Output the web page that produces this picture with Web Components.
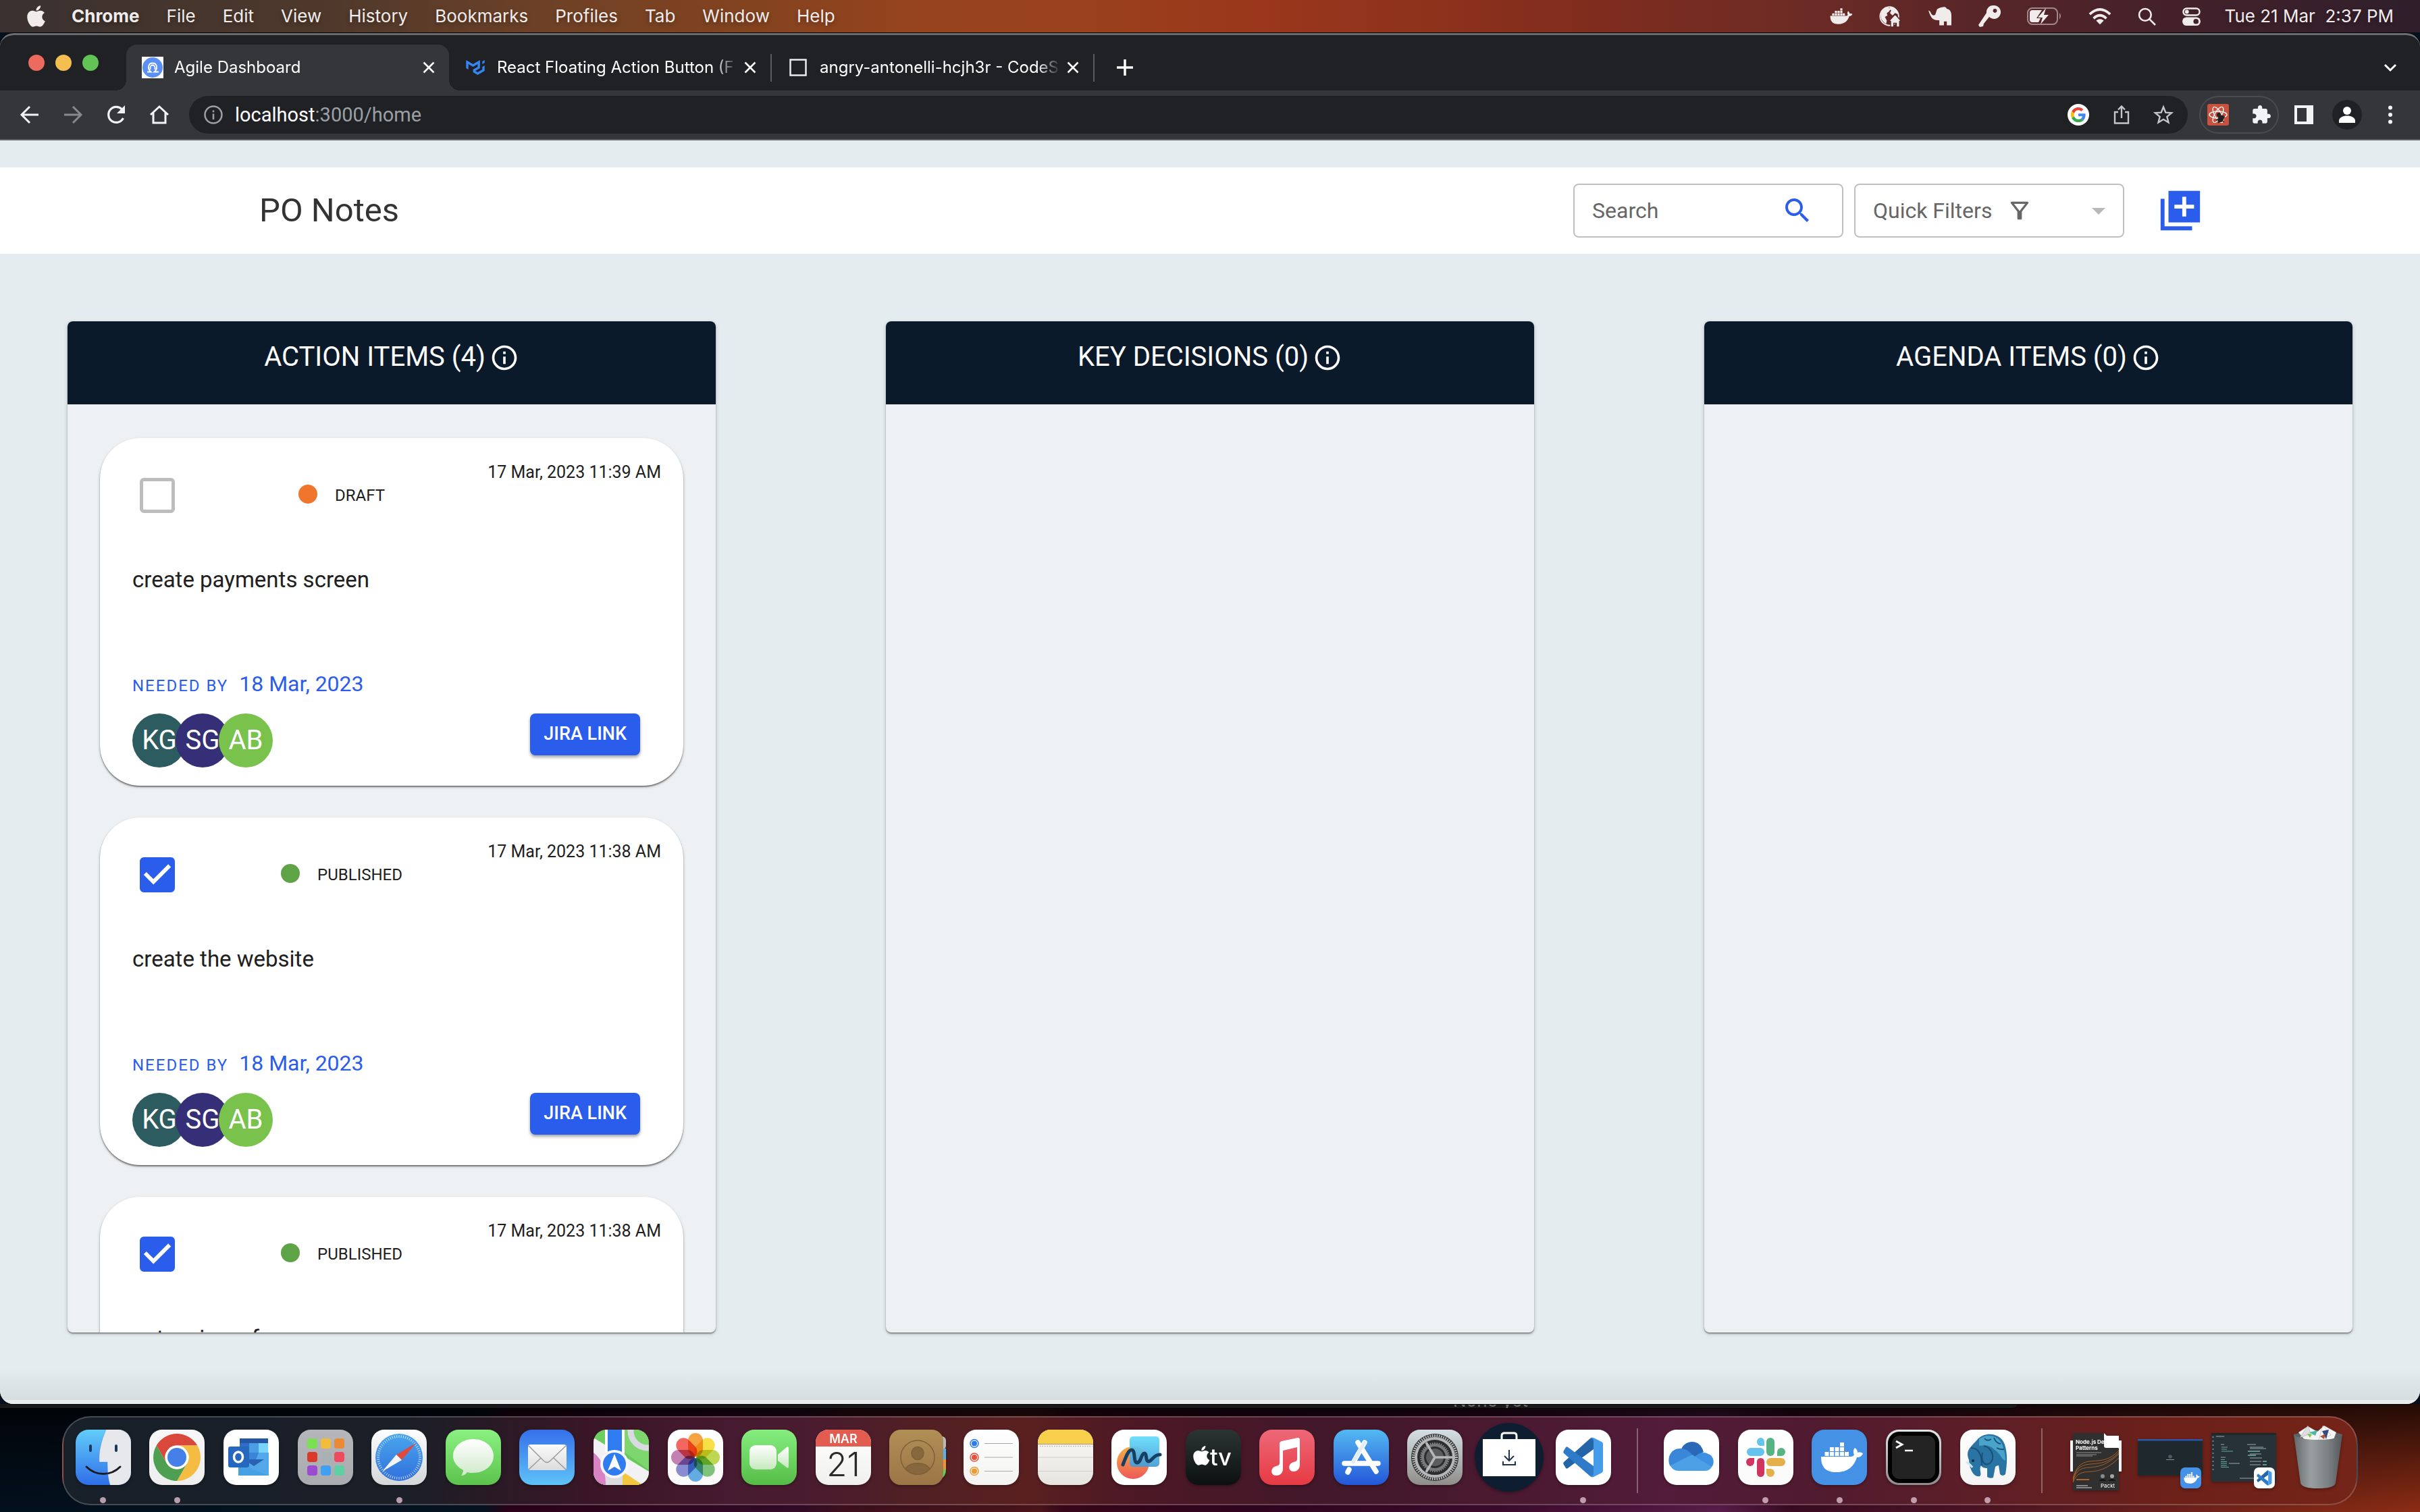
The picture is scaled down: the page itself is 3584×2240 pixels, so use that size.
<!DOCTYPE html>
<html lang="en">
<head>
<meta charset="utf-8">
<title>Agile Dashboard</title>
<style>
  html, body { margin: 0; height: 100%; }
  body { display: flex; flex-direction: column; height: 100vh; overflow: hidden; background: #04101e; font-family: Roboto, "Liberation Sans", sans-serif; }
</style>
</head>
<body>
<mac-menubar></mac-menubar>
<browser-window>
  <tab-strip slot="chrome">
    <browser-tab active icon="favAgile">Agile Dashboard</browser-tab>
    <browser-tab icon="favMui">React Floating Action Button (F</browser-tab>
    <browser-tab icon="favBox">angry-antonelli-hcjh3r - CodeS</browser-tab>
  </tab-strip>
  <nav-toolbar slot="chrome"></nav-toolbar>
  <notes-header>PO Notes</notes-header>
  <notes-board>
    <notes-column heading="ACTION ITEMS (4)">
      <note-card status="DRAFT" date="17 Mar, 2023 11:39 AM" due="18 Mar, 2023">create payments screen</note-card>
      <note-card status="PUBLISHED" date="17 Mar, 2023 11:38 AM" due="18 Mar, 2023">create the website</note-card>
      <note-card status="PUBLISHED" date="17 Mar, 2023 11:38 AM" due="18 Mar, 2023">get review of</note-card>
    </notes-column>
    <notes-column heading="KEY DECISIONS (0)"></notes-column>
    <notes-column heading="AGENDA ITEMS (0)"></notes-column>
  </notes-board>
</browser-window>
<mac-dock></mac-dock>

<script>
const DOCKER = '<rect x="42" y="19" width="6" height="6"/><path d="M27 26h6v6h-6zM34.500 26h6v6h-6zM42 26h6v6h-6zM19.500 33h6v6h-6zM27 33h6v6h-6zM34.500 33h6v6h-6zM42 33h6v6h-6zM49 33h6v6h-6z"/><path d="M14 40h43c4 0 5-1 6-3-2-4-1-8 1-10 3 2 4 4 4 7 3-1 6 0 8 1-2 5-5 6-9 6-4 13-13 22-30 22C20 63 14 55 14 40Z"/>';
const APPLE = '<path d="M318.700 268.700c-.2-36.700 16.400-64.400 50-84.800-18.800-26.900-47.200-41.700-84.700-44.600-35.500-2.800-74.300 20.700-88.500 20.700-15 0-49.400-19.700-76.400-19.700C63.300 141.200 4 184.800 4 273.500q0 39.300 14.400 81.200c12.800 36.700 59 126.700 107.200 125.200 25.200-.6 43-17.900 75.800-17.900 31.800 0 48.300 17.900 76.400 17.900 48.600-.7 90.400-82.500 102.600-119.300-65.200-30.700-61.700-90-61.700-91.900zm-56.600-164.200c27.300-32.400 24.800-61.900 24-72.500-24.100 1.400-52 16.400-67.900 34.900-17.500 19.800-27.800 44.300-25.600 71.900 26.100 2 49.900-11.400 69.500-34.300z"/>';
const VSCODE = '<path fill="#2465a8" d="M12 52c-1-1-1-3 0-4L51 13c2-2 4-1 5-1v17L18 57c-1 1-2 1-3 0Z"/><path fill="#2f7bc9" d="M12 31c-1 1-1 3 0 4l39 34c2 2 4 1 5 1V54L18 26c-1-1-2-1-3 0Z"/><path fill="#459ceb" d="M56 12l12 6q2 1 2 3v40q0 2-2 3l-12 6q-3 0-5-2 5 2 5-3V17q0-5-5-3 2-2 5-2Z"/>';
const lin = (id, a, b) => `<linearGradient id="${id}" x1="0" y1="0" x2="0" y2="1"><stop stop-color="${a}"/><stop offset="1" stop-color="${b}"/></linearGradient>`;
const tile = (a, b, inner = '') => `<svg viewBox="0 0 82 82"><defs>${lin('bg', a, b)}<clipPath id="c"><rect width="82" height="82" rx="19"/></clipPath></defs><rect width="82" height="82" rx="19" fill="url(#bg)"/><g clip-path="url(#c)">${inner}</g></svg>`;
const ticks = (n, r1, r2, w, col) => Array.from({length: n}, (_, i) => `<path d="M0 ${-r1}V${-r2}" transform="translate(41 41) rotate(${i * 360 / n})" stroke="${col}" stroke-width="${w}"/>`).join('');
const petals = ['#f5962a', '#f6dc2e', '#b5d13b', '#6cb96a', '#4f9fe0', '#7a7cc9', '#b86fa8', '#f0524a'];

const ICONS = {
  apple: `<svg viewBox="0 32 384 448" fill="currentColor">${APPLE}</svg>`,
  dockerMini: `<svg viewBox="13 17 64 48" fill="currentColor">${DOCKER}</svg>`,
  globe: '<svg viewBox="0 0 36 34"><circle cx="16" cy="17" r="14.500" fill="none" stroke="currentColor" stroke-width="2"/><path fill="currentColor" d="M3 12C6 5 10 3 14 3l4 3-3 4-3 2 1 4-4 2 3 6-1 5C5 26 1 20 3 12ZM17 2c8 1 12 6 13 12l-5-2-4 4-4-4 2-4-3-2Z"/><path fill="currentColor" stroke="#5a2628" stroke-width="1.500" d="M25 14l10 11h-3v9h-5v-6h-4v6h-5v-9h-3Z"/></svg>',
  elephant: '<svg viewBox="0 0 40 34" fill="currentColor"><path d="M0 7c2 0 4 3 5 6 2 3 5 3 7 1l3-9c4-3 8-4 11-4 3-1 5 1 6 3 6 1 8 6 8 12v17h-8v-7h-5v7h-8V24c-4 0-8 0-12-3C4 18 2 13 0 7Z"/></svg>',
  key: '<svg viewBox="0 0 34 34"><path fill="currentColor" fill-rule="evenodd" d="M23 1a10 10 0 1 1-6 17L9 28l-1 4-5 1-2-3 12-18A10 10 0 0 1 23 1Zm2 5a3 3 0 1 0 1 0Z"/></svg>',
  battery: '<svg viewBox="0 0 52 26"><rect x="1" y="1" width="44" height="24" rx="7" fill="none" stroke="currentColor" stroke-opacity=".5" stroke-width="2"/><path d="M48 8q4 4 0 10Z" fill="currentColor" fill-opacity=".5"/><path fill="currentColor" d="M8 4h14l-8 12h6l-3 6H8q-4 0-4-4V8q0-4 4-4Z"/><path fill="currentColor" d="M28 1L16 15h7l-3 10 12-14h-7Z"/></svg>',
  wifi: '<svg viewBox="0 0 36 26"><g fill="none" stroke="currentColor" stroke-width="4"><path d="M2 10Q18-5 34 10M8 16.500Q18 7 28 16.500"/></g><path fill="currentColor" d="M12 20q6-5 12 0l-6 6Z"/></svg>',
  search: '<svg viewBox="0 0 26 26" fill="none" stroke="currentColor" stroke-width="2.500"><circle cx="10.500" cy="10.500" r="8.500"/><path d="M17 17l8 8"/></svg>',
  control: '<svg viewBox="0 0 28 28"><rect x="1.500" y="1.500" width="25" height="10.500" rx="5.200" fill="none" stroke="currentColor" stroke-width="2.500"/><circle cx="7" cy="6.700" r="3" fill="currentColor"/><rect y="15" width="28" height="13" rx="6.500" fill="currentColor"/><circle cx="21" cy="21.500" r="4" fill="#45212a"/></svg>',
  favAgile: '<svg viewBox="0 0 32 32"><path fill="#fff" d="M0 0h32v32H0z"/><circle cx="16" cy="16" r="15" fill="#5a8ff5"/><path fill="none" stroke="#fff" stroke-width="1.800" d="M8 22.500h5.500c-6-5-4-13 2.500-13s8.500 8 2.500 13H25M12.500 19v-3a3.500 3.500 0 1 1 7 0v3"/></svg>',
  favMui: '<svg viewBox="-2 -1 28 26" fill="#3585f5"><path d="M0 2.475v10.390l3 1.733V7.670l6 3.465 6-3.465v3.465l-6 3.463v3.464l6 3.463 9-5.195V9.402l-3 1.733v3.463l-6 3.464-3-1.732 6-3.465V2.475L9 7.670 0 2.475zM24 2.475l-3 1.733v3.463l3-1.732V2.475z"/></svg>',
  favBox: '<svg viewBox="0 0 32 32"><path d="M4.500 4.500h23v23h-23z" fill="none" stroke="#e8eaed" stroke-width="2.500"/></svg>',
  close: '<svg viewBox="0 0 20 20" stroke="currentColor" stroke-width="2.600"><path d="M2.500 2.500l15 15M17.500 2.500l-15 15"/></svg>',
  plus: '<svg viewBox="0 0 24 24" stroke="currentColor" stroke-width="3.500"><path d="M0 12h24M12 0v24"/></svg>',
  chevron: '<svg viewBox="0 0 20 20" fill="none" stroke="currentColor" stroke-width="3"><path d="M2 6l8 8 8-8"/></svg>',
  back: '<svg viewBox="0 0 28 28" fill="none" stroke="currentColor" stroke-width="3"><path d="M27 14H3M14 2L2 14l12 12"/></svg>',
  forward: '<svg viewBox="0 0 28 28" fill="none" stroke="currentColor" stroke-width="3"><path d="M1 14h24M14 2l12 12-12 12"/></svg>',
  reload: '<svg viewBox="0 0 28 28"><path d="M24.500 19A11.500 11.500 0 1 1 22.500 6" fill="none" stroke="currentColor" stroke-width="3.200"/><path d="M27 0v12H15Z" fill="currentColor"/></svg>',
  home: '<svg viewBox="0 0 28 28" fill="none" stroke="currentColor" stroke-width="3"><path d="M1 14L14 2l13 12M5 11v15h18V11"/></svg>',
  infoThin: '<svg viewBox="0 0 28 28"><circle cx="14" cy="14" r="12.500" fill="none" stroke="currentColor" stroke-width="2.500"/><path fill="currentColor" d="M12.700 12.500h2.600V21h-2.600zM12.700 7.500h2.600v2.800h-2.600z"/></svg>',
  google: '<svg viewBox="0 0 32 32"><circle cx="16" cy="16" r="16" fill="#fff"/><g transform="translate(5 5) scale(.46)"><path fill="#EA4335" d="M24 9.500c3.540 0 6.710 1.220 9.210 3.600l6.850-6.850C35.900 2.380 30.470 0 24 0 14.620 0 6.510 5.380 2.560 13.220l7.980 6.190C12.430 13.720 17.740 9.500 24 9.500z"/><path fill="#4285F4" d="M46.980 24.550c0-1.570-.15-3.090-.38-4.550H24v9.020h12.940c-.58 2.960-2.260 5.480-4.780 7.180l7.730 6c4.510-4.180 7.090-10.360 7.090-17.650z"/><path fill="#FBBC05" d="M10.530 28.590c-.48-1.450-.76-2.990-.76-4.590s.27-3.140.76-4.590l-7.980-6.190C.92 16.460 0 20.120 0 24c0 3.880.92 7.540 2.560 10.780l7.970-6.190z"/><path fill="#34A853" d="M24 48c6.480 0 11.930-2.130 15.890-5.810l-7.730-6c-2.150 1.450-4.920 2.300-8.160 2.300-6.260 0-11.570-4.220-13.470-9.910l-7.980 6.190C6.510 42.620 14.620 48 24 48z"/></g></svg>',
  share: '<svg viewBox="0 0 28 28" fill="none" stroke="currentColor" stroke-width="2.400"><path d="M9 10H4v16.500h20V10h-5M14 19V2M9 6.500l5-5 5 5"/></svg>',
  star: '<svg viewBox="0 0 28 28" fill="none" stroke="currentColor" stroke-width="2.400"><path d="M14 2.500l3.300 8.200 8.800.6-6.800 5.600 2.200 8.600L14 20.800l-7.500 4.700 2.200-8.600-6.800-5.600 8.800-.6Z"/></svg>',
  react: '<svg viewBox="0 0 32 32"><rect width="32" height="32" rx="3" fill="#c9523e"/><g fill="none" stroke="#fff" stroke-width="1.300"><ellipse cx="16" cy="16" rx="13" ry="5"/><ellipse cx="16" cy="16" rx="13" ry="5" transform="rotate(60 16 16)"/><ellipse cx="16" cy="16" rx="13" ry="5" transform="rotate(120 16 16)"/></g><ellipse cx="20" cy="22" rx="4" ry="6" transform="rotate(35 20 22)" fill="#222"/><circle cx="17" cy="16" r="3" fill="#222"/><path d="M13 24l13-5M16 28l8-11M25 27l-9-8" stroke="#222" stroke-width="1.500"/></svg>',
  puzzle: '<svg viewBox="1 1.500 22 21" fill="currentColor"><path d="M20.500 11H19V7c0-1.100-.9-2-2-2h-4V3.500C13 2.120 11.880 1 10.500 1S8 2.120 8 3.500V5H4c-1.100 0-1.990.9-1.990 2v3.800H3.500c1.490 0 2.700 1.210 2.700 2.700s-1.210 2.700-2.700 2.700H2V20c0 1.100.9 2 2 2h3.800v-1.500c0-1.490 1.210-2.700 2.700-2.700 1.490 0 2.700 1.210 2.700 2.700V22H17c1.100 0 2-.9 2-2v-4h1.500c1.380 0 2.500-1.120 2.500-2.500S21.880 11 20.500 11z"/></svg>',
  panel: '<svg viewBox="0 0 28 28"><path fill="currentColor" fill-rule="evenodd" d="M0 0h28v28H0ZM4 4v20h14V4Z"/></svg>',
  person: '<svg viewBox="0 0 44 44"><circle cx="22" cy="22" r="22" fill="#202124"/><circle cx="22" cy="16" r="6" fill="#fff"/><path fill="#fff" d="M10 34v-3c0-5 6-7.500 12-7.500S34 26 34 31v3Z"/></svg>',
  dots: '<svg viewBox="0 0 28 28" fill="currentColor"><circle cx="14" cy="3.500" r="3"/><circle cx="14" cy="14" r="3"/><circle cx="14" cy="24.500" r="3"/></svg>',
  muiSearch: '<svg viewBox="0 0 24 24" fill="currentColor"><path d="M15.500 14h-.79l-.28-.27C15.410 12.590 16 11.110 16 9.500 16 5.910 13.090 3 9.500 3S3 5.910 3 9.500 5.910 16 9.500 16c1.610 0 3.090-.59 4.230-1.570l.27.28v.79l5 4.990L20.490 19l-4.990-5zm-6 0C7.010 14 5 11.990 5 9.500S7.010 5 9.500 5 14 7.010 14 9.500 11.990 14 9.500 14z"/></svg>',
  muiFilter: '<svg viewBox="0 0 24 24" fill="currentColor"><path d="M7 6h10l-5.010 6.300L7 6zm-2.750-.39C6.270 8.200 10 13 10 13v6c0 .55.45 1 1 1h2c.55 0 1-.45 1-1v-6s3.720-4.800 5.740-7.390c.51-.66.04-1.610-.79-1.610H5.040c-.83 0-1.300.95-.79 1.610z"/></svg>',
  muiDrop: '<svg viewBox="0 0 24 24" fill="currentColor"><path d="M7 10l5 5 5-5z"/></svg>',
  muiAdd: '<svg viewBox="0 0 24 24" fill="currentColor"><path d="M4 6H2v16h16v-2H4V6zm18-4H6v16h16V2zm-3 9h-4v4h-2v-4H9V9h4V5h2v4h4v2z"/></svg>',
  muiInfo: '<svg viewBox="0 0 24 24" fill="currentColor"><path d="M11 7h2v2h-2zm0 4h2v6h-2zm1-9C6.480 2 2 6.480 2 12s4.480 10 10 10 10-4.480 10-10S17.520 2 12 2zm0 18c-4.410 0-8-3.590-8-8s3.590-8 8-8 8 3.590 8 8-3.590 8-8 8z"/></svg>',
  muiTick: '<svg viewBox="3 3 18 18" fill="currentColor"><path d="M10 17l-5-5 1.410-1.410L10 14.170l7.590-7.590L19 8z"/></svg>',

  finder: tile('#62cdf9', '#2f6ee8', '<path fill="#e6e8ec" d="M45 0C38 16 34 32 35 48h12c0 14 1 24 4 34h31V0Z"/><path d="M22 24v7M60 24v7" stroke="#173a5c" stroke-width="4" stroke-linecap="round"/><path d="M16 55c14 14 36 14 50 0" fill="none" stroke="#1b1d22" stroke-width="3" stroke-linecap="round"/><path d="M45 0C38 16 34 32 35 48h12c0 14 1 24 4 34" fill="none" stroke="#2f6ee8" stroke-opacity=".35" stroke-width="1"/>'),
  chrome: tile('#f7f7f7', '#eeeeee', '<path fill="#d9483b" d="M10.700 23.500A35 35 0 0 1 71.300 23.500H41A17.500 17.500 0 0 0 25.800 49.750Z"/><path fill="#f4bd41" d="M71.300 23.500A35 35 0 0 1 41 76L56.200 49.750A17.500 17.500 0 0 0 41 23.500Z"/><path fill="#4f9f52" d="M41 76A35 35 0 0 1 10.700 23.500L25.800 49.750A17.500 17.500 0 0 0 56.200 49.750Z"/><circle cx="41" cy="41" r="17.500" fill="#fff"/><circle cx="41" cy="41" r="14" fill="#4580e8"/>'),
  outlook: tile('#fff', '#fff', '<path fill="#2557a4" d="M24 13h42v8H24z"/><path fill="#2f6ec4" d="M24 20h14v16H24z"/><path fill="#4b9de4" d="M38 20h14v14H38z"/><path fill="#79d4fb" d="M52 20h14v14H52z"/><path fill="#3c85d6" d="M38 34h14v16H38z"/><path fill="#52a8e8" d="M52 34h15v34H22V50h24Z"/><path fill="#2a63b6" d="M30 44h30L45 54Z"/><path fill="#46a0e4" d="M22 50l45 18H22Z"/><rect x="7" y="25" width="31" height="31" rx="3" fill="#2668bd"/><ellipse cx="22" cy="40.500" rx="6.500" ry="7.500" fill="none" stroke="#fff" stroke-width="3.500"/>'),
  launchpad: tile('#b4b6ba', '#a9abae', ['#7be04f', '#f3bd3b', '#e98b35', '#d93a2c', '#a9b1b5', '#ee4b5e', '#9a4bd0', '#3fa0f4', '#5fcfa4'].map((c, i) => `<rect x="${14 + (i % 3) * 20}" y="${13 + Math.floor(i / 3) * 20}" width="15" height="15" rx="4" fill="${c}"/>`).join('')),
  safari: tile('#fdfdfd', '#d5d6d8', '<defs>' + lin('s', '#49a6ec', '#3170dd') + '</defs><circle cx="41" cy="41" r="35" fill="url(#s)"/>' + ticks(60, 33, 29, 0.8, '#e8f3ff') + '<path fill="#e2493d" d="M66 20L45 45 37 37Z"/><path fill="#f6f6f6" d="M16 62L37 37l8 8Z"/>'),
  messages: tile('#8af182', '#5bc34c', '<defs>' + lin('s', '#ffffff', '#cfe9ca') + '</defs><path fill="url(#s)" d="M41 14c17 0 30 11 30 25S58 64 41 64c-3 0-6 0-9-1-2 3-5 5-9 5 2-3 3-5 3-8C17 55 11 48 11 39c0-14 13-25 30-25Z"/>'),
  mail: tile('#3570ea', '#5fc3f8', '<defs>' + lin('s', '#fbfbfb', '#dcdcdc') + '</defs><rect x="13" y="22" width="57" height="38" rx="4" fill="url(#s)"/><path d="M14 24l22 22q5 5 10 0l23-22M14 59l18-17M69 59L51 42" fill="none" stroke="#9b9b9b" stroke-width="1.500"/>'),
  maps: tile('#6fcf62', '#5fc556', '<path fill="#f2f2f4" d="M0 12L82 62v20H0Z"/><path fill="#d983c4" d="M0 34c10 8 18 20 18 48H0Z"/><path fill="#f3c63f" d="M43 62l30 20H43Z"/><path fill="#7ed66f" d="M44 0h38v60L44 32Z"/><circle cx="80" cy="2" r="25" fill="none" stroke="#d9d9e2" stroke-width="9"/><path fill="#dcdce0" d="M18 50h25v32H18z"/><path fill="#fff" d="M17 0h29v40H17z"/><path fill="#2f7bf0" d="M21 0h21v40H21z"/><circle cx="31" cy="51" r="21" fill="#f6f6f8"/><circle cx="31" cy="51" r="17" fill="#2f7bf0"/><path fill="#fff" d="M31 36l10 25-10-6-10 6Z"/>'),
  photos: tile('#fff', '#fafafa', '<g style="isolation:isolate">' + petals.map((c, i) => `<rect x="30" y="5" width="22" height="35" rx="11" fill="${c}" fill-opacity=".88" style="mix-blend-mode:multiply" transform="rotate(${i * 45} 41 41)"/>`).join('') + '</g>'),
  facetime: tile('#86ee7f', '#55bd46', '<defs>' + lin('s', '#ffffff', '#c5e8be') + '</defs><rect x="12" y="23" width="40" height="36" rx="9" fill="url(#s)"/><path fill="url(#s)" d="M54 37l13-11q3-2 3 2v26q0 4-3 2L54 46Z"/>'),
  calendar: tile('#fff', '#f0f0ee', '<path fill="#e25c50" d="M0 0h82v25H0z"/><text x="41" y="20" text-anchor="middle" font-family="Inter, sans-serif" font-weight="600" font-size="18" fill="#fff">MAR</text><text x="41" y="69" text-anchor="middle" font-family="Inter, sans-serif" font-weight="300" font-size="49" fill="#2b2b2b">21</text>'),
  contacts: '<svg viewBox="0 0 82 82"><defs>' + lin('s', '#b08f55', '#9c7547') + '</defs><rect x="60" y="10" width="24" height="20" rx="6" fill="#b9b9bb"/><path fill="#55b5ea" d="M70 28h14v16H70z"/><path fill="#f09136" d="M70 44h14v15H70z"/><path fill="#63cf57" d="M70 59h14q0 10-8 14h-6z"/><rect width="80" height="82" rx="17" fill="url(#s)"/><g stroke="#7d6038" stroke-width="1.500"><circle cx="42" cy="41" r="25" fill="none"/><ellipse cx="42" cy="35" rx="9" ry="9.500" fill="#87683e"/><path fill="#87683e" d="M24 58c6-11 30-11 36 0-9 11-27 11-36 0Z"/></g></svg>',
  reminders: tile('#fff', '#f3f3f1', ['#2f7bf0', '#e8503c', '#ec9a33'].map((c, i) => `<circle cx="16" cy="${20.500 + i * 20.500}" r="6" fill="none" stroke="${c}" stroke-width="1.500"/><circle cx="16" cy="${20.500 + i * 20.500}" r="4" fill="${c}"/><path d="M31 ${20.500 + i * 20.500}h42" stroke="#a9a9ae" stroke-width="1.200"/>`).join('')),
  notes: tile('#fbfaf8', '#e6e4df', '<path fill="#f7cf4a" d="M0 0h82v21H0z"/><path d="M0 21.500h82" stroke="#a39a86"/><path d="M3 24.500h78" stroke="#b5b1a8" stroke-width="1.500" stroke-dasharray="1.500 2"/><path d="M0 41h82M0 61.500h82" stroke="#d2cfca"/>'),
  freeform: tile('#fff', '#fff', '<defs>' + lin('s', '#65dcfb', '#459bd6') + lin('t', '#f6ae45', '#ee5a58') + '</defs><circle cx="32" cy="49" r="24" fill="url(#t)"/><rect x="27" y="10" width="44" height="45" rx="5" fill="url(#s)" fill-opacity=".93"/><path d="M17 52c5-13 8-22 13-22 6 0 2 19 8 19s6-14 11-14c4 0 1 12 6 12s7-10 17-10" fill="none" stroke="#173f63" stroke-width="5" stroke-linecap="round"/>'),
  tv: tile('#2c3533', '#0c1011', `<g fill="#fff" transform="translate(11 22) scale(.064)">${APPLE}</g><text x="36" y="53" font-family="Inter, sans-serif" font-weight="500" font-size="34" fill="#fff">tv</text>`),
  music: tile('#ee6878', '#e63a43', '<path fill="#fff" d="M30 21q0-3 3-4l24-5q3 0 3 3v37c0 6-4 10-9 10-9 0-9-12 0-14 4-1 5-2 5-5V26l-21 5v27c0 6-4 10-10 10-9 0-9-12 0-14 4-1 5-2 5-5Z"/>'),
  appstore: tile('#53b9f2', '#2456d8', '<g stroke="#fff" stroke-width="7.500" stroke-linecap="round"><path d="M46 19L29 49M36 19l27 43M16 50h50M23 59l-2 4"/></g><path d="M46 19L29 48" stroke="#e3edf8" stroke-width="5" stroke-linecap="round"/>'),
  settings: tile('#d5dfe4', '#8f8d8a', '<circle cx="41" cy="41" r="35" fill="#2c2d2e"/>' + ticks(60, 34, 30, 1.800, '#b9bcbd') + '<circle cx="41" cy="41" r="28" fill="none" stroke="#b5b8b9" stroke-width="4"/>' + ticks(40, 22, 19, 1.600, '#8a8c8d') + '<circle cx="41" cy="41" r="18" fill="none" stroke="#77797a" stroke-width="4"/><circle cx="41" cy="41" r="13" fill="#5b5d5e"/><path d="M41 41h26M41 41L28 19M41 41L28 63" stroke="#b5b8b9" stroke-width="3.500"/>'),
  store: '<svg viewBox="0 0 82 82"><circle cx="41" cy="41" r="51" fill="#0f1d31"/><path d="M30 15V9q0-4 4-4h14q4 0 4 4v6" fill="none" stroke="#fff" stroke-width="3"/><path fill="#fff" d="M2 14h78v55H2z"/><g fill="none" stroke="#1f3350" stroke-width="2"><path d="M41 30v15M34 39l7 7 7-7M32 47v5h18v-5"/></g></svg>',
  vscode: tile('#fff', '#fff', VSCODE),
  onedrive: tile('#fff', '#fff', '<path fill="#2a68b8" d="M25 32c2-9 9-14 17-14s14 5 17 15L41 44Z"/><path fill="#3a86d8" d="M9 53C4 40 12 27 25 28c8 0 14 5 17 9L12 56Z"/><path fill="#3d90e2" d="M46 40c6-6 14-8 20-4 9 3 10 16 4 20Z"/><path fill="#4ba0e6" d="M10 53l32-16 29 18q-3 6-10 6H22q-9 0-12-8Z"/>'),
  slack: tile('#fff', '#fafafa', '<g fill="#65c4ee"><path d="M39 24h-6a5.500 6 0 1 1 6-6Z"/><rect x="13" y="27" width="26" height="12" rx="6"/></g><g fill="#57b382"><rect x="42" y="12" width="12" height="27" rx="6"/><path d="M58 39v-6a6 6 0 1 1 6 6Z"/></g><g fill="#cf3560"><path d="M24 42v6a6 6 0 1 1-6-6Z"/><rect x="28" y="42" width="11" height="28" rx="5.500"/></g><g fill="#e5b04c"><rect x="42" y="42" width="28" height="12" rx="6"/><path d="M42 58h6a6 6 0 1 1-6 6Z"/></g>'),
  docker: tile('#4591e6', '#4591e6', `<g fill="#fff">${DOCKER}</g>`),
  terminal: tile('#dfe6ea', '#8f8b8c', '<rect x="3" y="3" width="76" height="76" rx="17" fill="#000"/><rect x="9" y="9" width="64" height="64" rx="11" fill="#232323"/><path d="M15 17l9 5-9 5" fill="none" stroke="#fff" stroke-width="2.800"/><path d="M28 31h12" stroke="#fff" stroke-width="2.500"/>'),
  postgres: tile('#fff', '#f4f4f4', '<path fill="#2a74a4" d="M26 14c12-12 34-9 40 8 4 12 4 28 1 44q-4 4-8 0l-2-13q-3 0-5 2l-3 16q-5 2-9-1V57c-4 0-8-1-9-4-4 6 2 13-2 16-9 2-15-10-16-24C7 30 16 26 26 14Z"/><path fill="#4aa3c9" d="M28 14c12-9 30-6 35 10 3 8 4 16 4 22-6-2-8-12-16-16-5-6-12-8-23-6Z"/><path fill="none" stroke="#18507a" stroke-width="2" d="M16 27c10 0 16 8 16 26M35 24c12 2 19 20 7 27-8 3-11-8-9-17M36 13q4 5 10 1M50 12q3 8 10 9M54 27q5 3 11 2"/><circle cx="19" cy="46" r="2" fill="#0e3147"/><path d="M9 48q6 3 9 8" stroke="#cfe6f1" stroke-width="3" fill="none"/>'),
  book: '<svg viewBox="0 0 82 92"><path fill="#f4f4f6" d="M3 16h76v46H3z"/><path fill="#fff" d="M40 9h35v40H40z"/><path fill="#303030" d="M7 5h45l23 23v62H7z"/><g fill="none" stroke="#c56a24" stroke-width=".8"><path d="M7 76C18 40 38 72 75 36M7 74C18 34 44 66 75 34M7 78C20 48 38 78 75 42M7 72C20 28 46 62 75 31"/></g><text x="11" y="21" font-family="Inter, sans-serif" font-size="8" font-weight="700" fill="#fff">Node.js De</text><text x="11" y="30" font-family="Inter, sans-serif" font-size="8" font-weight="700" fill="#fff">Patterns</text><path d="M12 34h37M12 37h30M12 39h24" stroke="#aaa" stroke-width=".8"/><path fill="#fff" d="M53 5l22 22H56q-3 0-3-3Z"/><path d="M12 74h19" stroke="#d47427" stroke-width="1.500"/><path d="M12 83h17M12 86h23" stroke="#ddd" stroke-width="1.200"/><circle cx="51" cy="69" r="3" fill="#8a8a8a"/><circle cx="65" cy="69" r="3" fill="#a5a5a5"/><path fill="#161616" d="M45 76q6-6 12 0ZM59 76q6-6 12 0Z"/><text x="48" y="86" font-family="Inter, sans-serif" font-size="8" fill="#fff">Packt</text></svg>',
  winDocker: `<svg viewBox="0 0 96 82"><path fill="#1f282d" d="M0 9h96v54H0z"/><path fill="#2b57a8" d="M0 9h96v2.500H0z"/><circle cx="48" cy="35" r="2.800" fill="#4b5a63"/><path d="M42 39.500h12" stroke="#8b969b" stroke-width="1"/><rect x="63" y="51" width="31" height="31" rx="7" fill="#4591e6"/><g fill="#fff" transform="translate(63 51) scale(.378)">${DOCKER}</g></svg>`,
  winCode: `<svg viewBox="0 0 96 82"><path fill="#263238" d="M0 0h96v72H0z"/><path fill="#1c262b" d="M0 0h96v2.500H0z"/><g stroke="#6fb5b0" stroke-width=".9"><path d="M15 21h9M15 24h8M15 27h17M14 39.500h6M14 42.500h9M14 45h9M14 48h9M14 50.500h12"/><path stroke="#aab5b8" d="M14 17h5M14 36h7M53 17h13M57 21h20M57 23h24M57 31h17M57 37h18M57 42h17M57 47h16M7 5h12M26 45h16M42 67h24"/><path stroke-width="1.500" d="M54 27h18M54 33h12M76 42h6M76 47h6"/></g><path d="M2.500 5v54" stroke="#72828a" stroke-width="2" stroke-dasharray="2 4"/><rect x="63" y="51" width="31" height="31" rx="7" fill="#fff"/><g transform="translate(63 51) scale(.378)">${VSCODE}</g></svg>`,
  trash: '<svg viewBox="0 0 74 96"><defs><linearGradient id="s"><stop stop-color="#626769"/><stop offset=".35" stop-color="#9a9fa1"/><stop offset=".7" stop-color="#7c8183"/><stop offset="1" stop-color="#55595b"/></linearGradient></defs><path fill="#5d6163" d="M1 15q35-12 72 0l-3 10H4Z"/><g stroke="#888" stroke-width=".4"><path fill="#f4f4f4" d="M8 12l14-9 14 8 10-9 18 10-4 11-24 5-20-6Z"/><path fill="#dedede" d="M22 2l4 12-16 6Z"/><path fill="#fff" d="M44 2l12 14-18 8Z"/></g><path fill="#46b7a9" d="M24 12l12-3-3 8Z"/><path fill="#7ac943" d="M21 14l7 1-3 5Z"/><path fill="#324b86" d="M43 10l10-2-4 14Z"/><path fill="#b5532e" d="M40 18l8-4-2 8Z"/><path fill="url(#s)" d="M1 15q8 8 36 8t36-8l-10 72q-2 8-26 8t-26-8Z"/></svg>'
};

const COMMON = ':host,*{box-sizing:border-box}button{font:inherit;color:inherit;background:none;border:0;padding:0;margin:0;display:flex;align-items:center;justify-content:center}';
class BaseElement extends HTMLElement {
  constructor() {
    super();
    const t = document.createElement('template');
    t.innerHTML = `<style>${COMMON}${this.styles()}</style>${this.markup()}`;
    this.attachShadow({ mode: 'open' }).append(t.content.cloneNode(true));
  }
  styles() { return ':host{display:block}'; }
  markup() { return '<slot></slot>'; }
}

customElements.define('x-icon', class extends BaseElement {
  styles() { return ':host{display:block;flex:none;width:28px;height:28px}svg{display:block;width:100%;height:100%;overflow:visible}'; }
  markup() { return ICONS[this.getAttribute('name')]; }
});

customElements.define('mac-menubar', class extends BaseElement {
  styles() { return `
    :host{flex:none;display:flex;align-items:center;height:48px;padding:0 39px 0 40px;color:#f0eceb;font:400 26px/32px Inter,sans-serif;text-shadow:0 3px 6px rgba(0,0,0,.3);
      background:linear-gradient(90deg,#393130 0,#50392b 14%,#6f4126 23%,#83431f 31%,#96431e 38%,#9a3f1c 46%,#9a371c 52%,#8e321c 59%,#7f2c1e 66%,#702c24 73%,#5a2628 81%,#45212a 89%,#2f1f2b 100%)}
    nav{display:flex;gap:40px;flex:1}
    b{font-weight:700}
    .apple{width:27px;height:32px;margin-right:39px}
    .tray{display:flex;align-items:center;gap:39px}
    .tray x-icon{width:34px;height:34px}
    .tray .wide{width:52px;height:26px}
    .tray .sm{width:27px;height:27px}
    .tray time{white-space:pre;margin-left:-3px}`; }
  markup() { return `<x-icon class="apple" name="apple"></x-icon>
    <nav><b>Chrome</b>${['File','Edit','View','History','Bookmarks','Profiles','Tab','Window','Help'].map(t => `<span>${t}</span>`).join('')}</nav>
    <div class="tray"><x-icon name="dockerMini"></x-icon><x-icon name="globe"></x-icon><x-icon name="elephant"></x-icon><x-icon name="key"></x-icon><x-icon class="wide" name="battery"></x-icon><x-icon name="wifi"></x-icon><x-icon class="sm" name="search"></x-icon><x-icon class="sm" name="control"></x-icon><time>Tue 21 Mar  2:37 PM</time></div>`; }
});

customElements.define('browser-window', class extends BaseElement {
  styles() { return `
    :host{flex:1;min-height:0;display:flex;flex-direction:column;margin-top:1px;overflow:hidden;border-radius:20px;border-top:3px solid #6b6c6e;background:#e4ecef;box-shadow:0 0 0 1px #000;position:relative;z-index:1}
    .page{flex:1;min-height:0;display:flex;flex-direction:column;border-top:2px solid #5f6063;padding-top:40px;
      background:linear-gradient(#e4ecef,#e4ecef) top/100% calc(100% - 48px) no-repeat,linear-gradient(#e4ecef,#d7dee2) bottom/100% 48px no-repeat}
    .edge{flex:none;height:6px;background:#ebecec}`; }
  markup() { return '<slot name="chrome"></slot><div class="page"><slot></slot></div><div class="edge"></div>'; }
});

customElements.define('tab-strip', class extends BaseElement {
  styles() { return `
    :host{flex:none;display:flex;align-items:flex-end;height:82px;background:#202124;color:#fff;padding-right:34px}
    .lights{display:flex;gap:16px;align-self:center;margin:0 41px 0 42px}
    .lights i{width:24px;height:24px;border-radius:50%}
    .add{width:24px;height:68px;margin-left:33px}
    .add x-icon{width:24px;height:24px}
    .more{margin-left:auto;height:68px}
    .more x-icon{width:20px;height:20px}`; }
  markup() { return `<div class="lights"><i style="background:#ec6a5e"></i><i style="background:#f4bf50"></i><i style="background:#61c455"></i></div><slot></slot>
    <button class="add" aria-label="New tab"><x-icon name="plus"></x-icon></button><button class="more" aria-label="Search tabs"><x-icon name="chevron"></x-icon></button>`; }
});

customElements.define('browser-tab', class extends BaseElement {
  styles() { return `
    :host{display:flex;align-items:center;gap:16px;width:478px;height:68px;padding:0 20px 0 23px;font:400 24px/32px Inter,sans-serif;color:#fff;position:relative}
    :host([active]){background:#35363a;border-radius:16px 16px 0 0}
    :host([active])::before,:host([active])::after{content:"";position:absolute;bottom:0;width:16px;height:16px}
    :host([active])::before{left:-16px;background:radial-gradient(circle at 0 0,transparent 16px,#35363a 16px)}
    :host([active])::after{right:-16px;background:radial-gradient(circle at 100% 0,transparent 16px,#35363a 16px)}
    :host(:not([active])){border-right:2px solid transparent;border-image:linear-gradient(transparent 22%,#5a5b5e 22%,#5a5b5e 80%,transparent 80%) 1}
    .title{flex:1;min-width:0;white-space:nowrap;overflow:hidden;-webkit-mask-image:linear-gradient(90deg,#000 90%,transparent 100%);mask-image:linear-gradient(90deg,#000 90%,transparent 100%)}
    .fav{width:32px;height:32px}
    .x{margin-left:-8px}
    .x x-icon{width:20px;height:20px}`; }
  markup() { return `<x-icon class="fav" name="${this.getAttribute('icon')}"></x-icon><span class="title"><slot></slot></span><button class="x" aria-label="Close tab"><x-icon name="close"></x-icon></button>`; }
});

customElements.define('nav-toolbar', class extends BaseElement {
  styles() { return `
    :host{flex:none;display:flex;align-items:center;height:72px;padding:0 30px;background:#35363a;color:#f1f3f4}
    .nav{display:flex;gap:36px;margin-right:30px}
    .off{color:#88898c}
    .omni{flex:1;display:flex;align-items:center;height:56px;border-radius:28px;background:#202124;padding:0 22px;color:#c4c6c9}
    .omni .i{color:#9aa0a6;margin-right:18px}
    .url{flex:1;font:400 29px/40px Roboto,sans-serif;color:#9aa0a6}
    .url b{font-weight:400;color:#fff}
    .acts{display:flex;align-items:center;gap:34px}
    .acts .g{width:32px;height:32px}
    .ext{display:flex;align-items:center;gap:34px;height:56px;border:2px solid #4a4b4f;border-radius:28px;padding:0 10px;margin:0 23px 0 17px}
    .ext .r{width:32px;height:32px}
    .end{display:flex;align-items:center;gap:28px}
    .end .p{width:44px;height:44px}`; }
  markup() { return `<div class="nav"><button aria-label="Back"><x-icon name="back"></x-icon></button><button class="off" aria-label="Forward"><x-icon name="forward"></x-icon></button><button aria-label="Reload"><x-icon name="reload"></x-icon></button><button aria-label="Home"><x-icon name="home"></x-icon></button></div>
    <div class="omni"><x-icon class="i" name="infoThin"></x-icon><span class="url"><b>localhost</b>:3000/home</span><div class="acts"><x-icon class="g" name="google"></x-icon><x-icon name="share"></x-icon><x-icon name="star"></x-icon></div></div>
    <div class="ext"><x-icon class="r" name="react"></x-icon><x-icon name="puzzle"></x-icon></div>
    <div class="end"><x-icon name="panel"></x-icon><x-icon class="p" name="person"></x-icon><x-icon name="dots"></x-icon></div>`; }
});

customElements.define('notes-header', class extends BaseElement {
  styles() { return `
    :host{flex:none;display:flex;align-items:center;gap:16px;height:128px;padding:0 320px 0 384px;background:#fff;color:#666}
    h1{flex:1;margin:0;font:400 49px/64px Roboto,sans-serif;color:#333}
    label{display:flex;align-items:center;width:400px;height:80px;border:2px solid #c0c0c0;border-radius:8px;padding:0 12px 0 26px}
    input,select{font:400 32px/40px Roboto,sans-serif;color:#666;border:0;padding:0;margin:0;background:none;outline:0;min-width:0;appearance:none}
    input{flex:1}
    input::placeholder{color:#666;opacity:1}
    .find{color:#2a5dec;margin-right:30px}
    .find x-icon{width:48px;height:48px}
    .funnel{width:40px;height:40px;margin-left:20px}
    .drop{width:48px;height:48px;margin-left:auto;color:#b8b8b8}
    .new{color:#2a5dec;margin-left:32px}
    .new x-icon{width:70px;height:70px}`; }
  markup() { return `<h1><slot></slot></h1>
    <label><input type="text" placeholder="Search" aria-label="Search"><button class="find" aria-label="Run search"><x-icon name="muiSearch"></x-icon></button></label>
    <label><select aria-label="Quick Filters"><option>Quick Filters</option></select><x-icon class="funnel" name="muiFilter"></x-icon><x-icon class="drop" name="muiDrop"></x-icon></label>
    <button class="new" aria-label="Add note"><x-icon name="muiAdd"></x-icon></button>`; }
});

customElements.define('notes-board', class extends BaseElement {
  styles() { return ':host{flex:1;min-height:0;display:grid;grid-template-columns:repeat(3,1fr);grid-template-rows:minmax(0,1fr);gap:252px;padding:100px 100px}'; }
});

customElements.define('notes-column', class extends BaseElement {
  styles() { return `
    :host{display:flex;flex-direction:column;min-height:0;overflow:hidden;border-radius:8px;background:#edf1f4;box-shadow:0 2px 2px rgba(0,0,0,.35),0 2px 6px rgba(0,0,0,.16)}
    h2{flex:none;display:flex;justify-content:center;gap:6px;margin:0;height:124px;padding-top:29px;background:#0a1a2a;color:#fff;font:400 40px/48px Roboto,sans-serif;border-bottom:1px solid #e6e6e0}
    h2 x-icon{width:44px;height:44px;margin-top:3px}
    .list{flex:1;min-height:0;overflow-y:auto;scrollbar-width:none;display:flex;flex-direction:column;gap:47px;padding:49px 48px 0}`; }
  markup() { return `<h2>${this.getAttribute('heading')}<x-icon name="muiInfo"></x-icon></h2><div class="list"><slot></slot></div>`; }
});

customElements.define('note-card', class extends BaseElement {
  styles() { return `
    :host{flex:none;display:block;padding:35px 33px 27px 48px;background:#fff;border-radius:60px;color:#202020;box-shadow:0 2px 2px rgba(0,0,0,.45),0 2px 5px rgba(0,0,0,.15)}
    .top{display:grid;grid-template-columns:180px 260px 1fr;align-items:center;height:100px}
    .tick{display:grid;width:52px;height:52px;margin-left:11px;color:#fff}
    .tick>*{grid-area:1/1;width:52px;height:52px;margin:0}
    input{appearance:none;border:5px solid #bdbdbd;border-radius:6px}
    input:checked{background:#2a5dec;border-color:#2a5dec}
    input:not(:checked)+x-icon{visibility:hidden}
    .tick x-icon{pointer-events:none}
    .status{display:flex;align-items:center;justify-content:center;gap:26px;font:400 24px/32px Roboto,sans-serif}
    .status i{width:28px;height:28px;margin-bottom:4px;border-radius:50%;background:${this.getAttribute('status') === 'DRAFT' ? '#f0762d' : '#5fa347'}}
    time{align-self:start;justify-self:end;white-space:nowrap;font:400 25px/32px Roboto,sans-serif}
    p{margin:51px 0 0;height:154px;font:400 33px/48px Roboto,sans-serif}
    .need{display:flex;align-items:baseline;gap:16px;height:48px;color:#2a5dec;font:400 32px/48px Roboto,sans-serif}
    .need small{font-size:24px;letter-spacing:2px}
    .foot{display:flex;align-items:flex-start;justify-content:space-between;margin-top:20px;padding-right:31px}
    .who{display:flex;padding-right:16px}
    .who span{width:80px;height:80px;margin-right:-16px;border-radius:50%;color:#fff;font:400 40px/80px Roboto,sans-serif;text-align:center}
    .jira{height:62px;padding:0 20px;border-radius:8px;background:#2a5dec;color:#fff;font:500 27px/60px Roboto,sans-serif;text-decoration:none;box-shadow:0 3px 4px rgba(0,0,0,.35)}`; }
  markup() { const done = this.getAttribute('status') === 'PUBLISHED'; return `
    <div class="top"><span class="tick"><input type="checkbox" aria-label="Published" ${done ? 'checked' : ''}><x-icon name="muiTick"></x-icon></span>
    <span class="status"><i></i>${this.getAttribute('status')}</span><time>${this.getAttribute('date')}</time></div>
    <p><slot></slot></p>
    <div class="need"><small>NEEDED BY</small><span>${this.getAttribute('due')}</span></div>
    <div class="foot"><div class="who"><span style="background:#2d5c60">KG</span><span style="background:#352f78">SG</span><span style="background:#79c24c">AB</span></div><a class="jira" href="#">JIRA LINK</a></div>`; }
});

customElements.define('dock-app', class extends BaseElement {
  styles() { return `
    :host{flex:1;min-width:0;display:flex;flex-direction:column;align-items:center;padding-top:18px}
    x-icon{width:82px;height:82px;filter:drop-shadow(0 2px 2px rgba(0,0,0,.3))}
    :host([size=book]) x-icon{height:92px;margin-bottom:-10px}
    :host([size=window]) x-icon{width:96px;height:82px;margin:5px 0 -5px}
    :host([size=trash]) x-icon{width:74px;height:96px;margin:-8px 0 -6px}
    i{width:9px;height:9px;border-radius:50%;margin-top:18px;background:#d3b4c4;opacity:0}
    :host([running]) i{opacity:.85}`; }
  markup() { return `<x-icon name="${this.getAttribute('icon')}"></x-icon><i></i>`; }
});

customElements.define('mac-dock', class extends BaseElement {
  styles() { return `
    :host{flex:none;display:flex;flex-direction:column;height:160px;padding-bottom:10px;
      background:linear-gradient(rgba(0,0,0,.75),rgba(0,0,0,0) 100%),linear-gradient(90deg,#03101e 0,#04121f 20%,#2b0218 21%,#330a28 33%,#3e0f1c 35%,#4a141a 43%,#38061a 44%,#30041f 52%,#3c0a2c 62%,#5a1c4a 71%,#3a0a22 74%,#4a1224 81%,#72241a 92%,#8c2c14 100%)}
    .behind{flex:none;height:7px;margin-right:596px;padding-left:2152px;display:flex;align-items:flex-end;overflow:hidden;background:#17191b;border-bottom:1px solid #000;border-radius:0 0 10px 0;color:#6d6e70;font:400 26px/22px Inter,sans-serif}
    .dock{flex:1;min-height:0;display:flex;margin:11px 92px 0;padding:0 2px 0 4px;border:2px solid rgba(255,255,255,.2);border-radius:42px;
      background:linear-gradient(90deg,#18202a 0,#1b1f28 15%,#2a1a25 19%,#3a1626 23%,#461a30 29%,#4a1c2e 33%,#502024 37%,#5a2020 42%,#4c1826 47%,#42182a 55%,#4b1a32 64%,#521c3a 70%,#501b30 76%,#5c1e28 83%,#6c2119 92%,#752418 100%)}
    hr{flex:none;width:51px;height:96px;margin:16px 0 0;border:0;background:linear-gradient(90deg,transparent 25px,rgba(255,255,255,.3) 25px,rgba(255,255,255,.3) 27px,transparent 27px)}`; }
  markup() {
    const app = n => `<dock-app icon="${n}" ${['finder','chrome','safari','vscode','slack','docker','terminal','postgres'].includes(n) ? 'running' : ''}></dock-app>`;
    return `<div class="behind">None yet</div><div class="dock">${['finder','chrome','outlook','launchpad','safari','messages','mail','maps','photos','facetime','calendar','contacts','reminders','notes','freeform','tv','music','appstore','settings','store','vscode'].map(app).join('')}<hr>${['onedrive','slack','docker','terminal','postgres'].map(app).join('')}<hr><dock-app size="book" icon="book"></dock-app><dock-app size="window" icon="winDocker"></dock-app><dock-app size="window" icon="winCode"></dock-app><dock-app size="trash" icon="trash"></dock-app></div>`;
  }
});
</script>
</body>
</html>
